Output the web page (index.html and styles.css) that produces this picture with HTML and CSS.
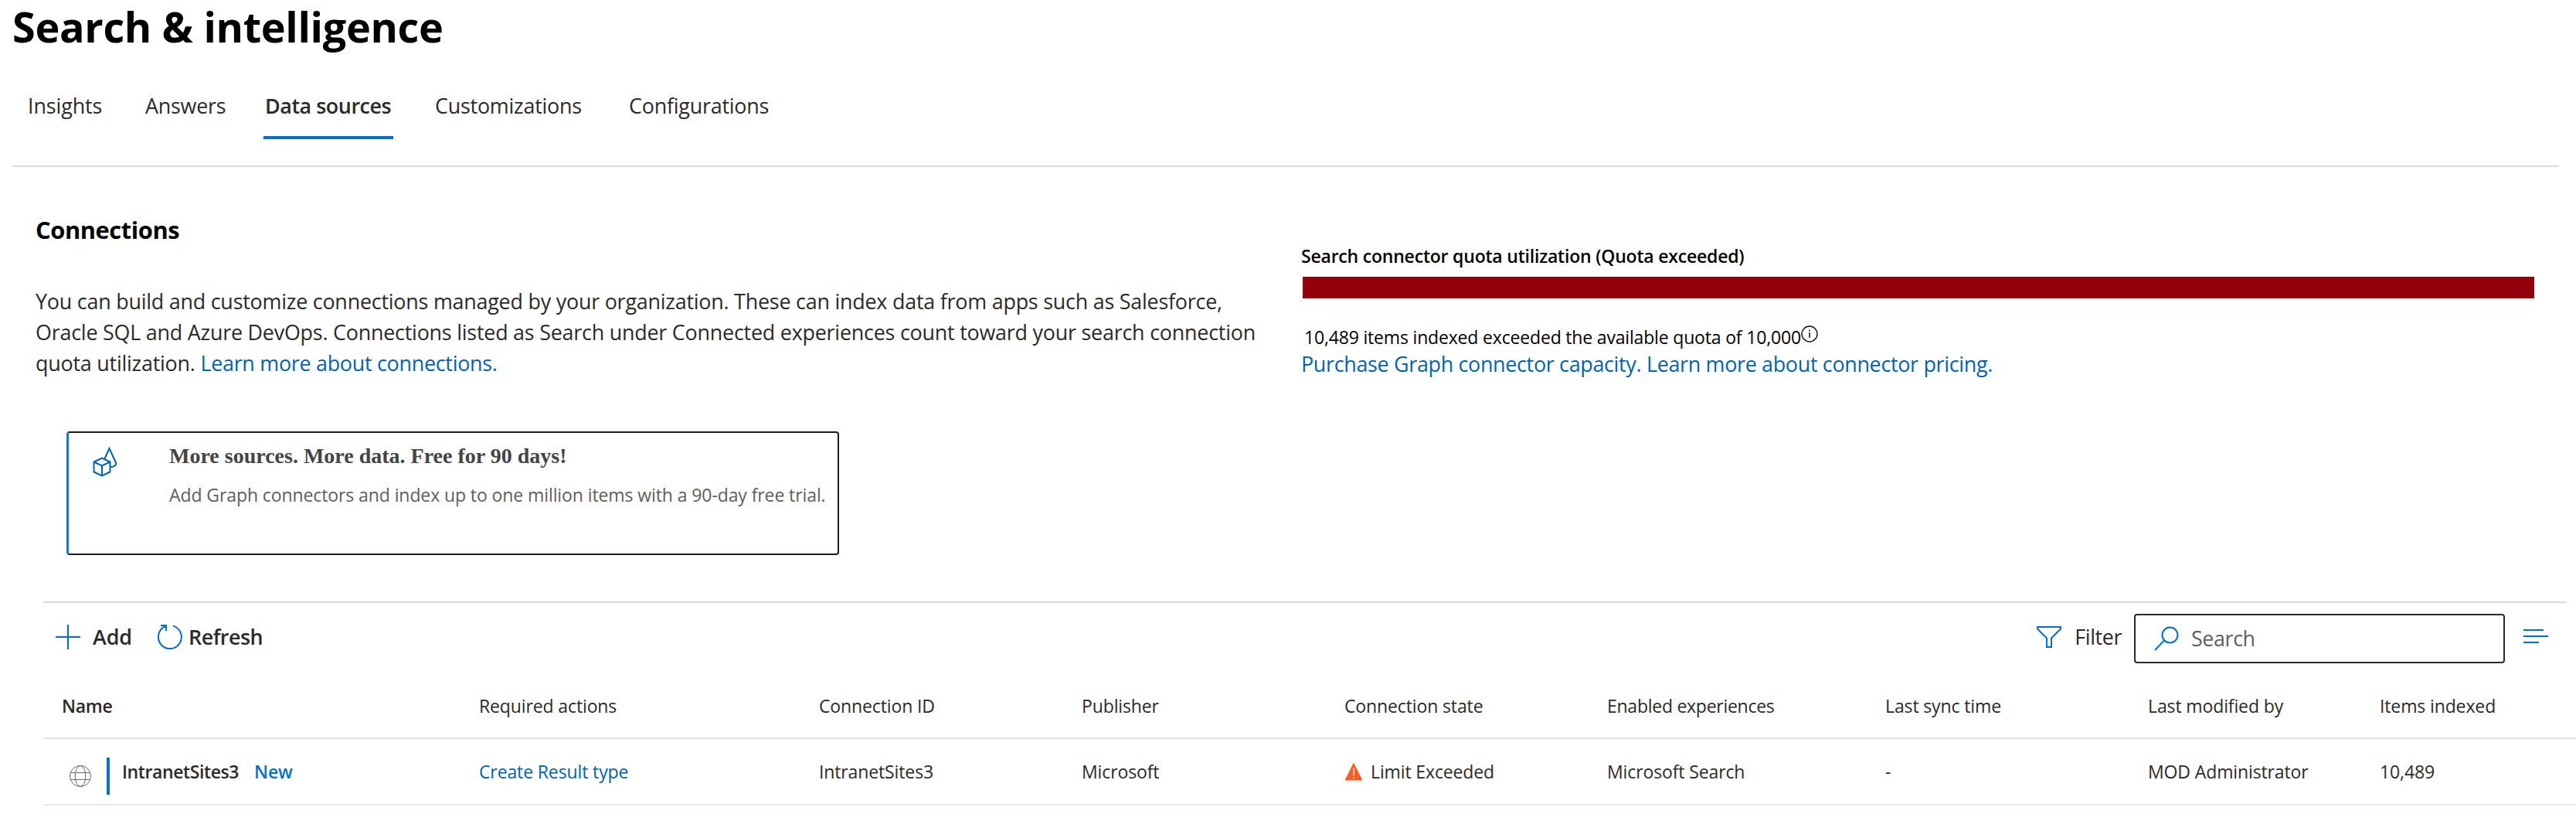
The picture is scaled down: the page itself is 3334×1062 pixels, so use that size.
FILE: index.html
```html
<!DOCTYPE html>
<html lang="en">
<head>
<meta charset="utf-8">
<title>Search &amp; intelligence</title>
<link rel="stylesheet" href="styles.css">
</head>
<body>
<header class="page-header">
  <h1 class="page-title">Search &amp; intelligence</h1>
  <nav class="tabs">
    <a class="tab tab-insights">Insights</a>
    <a class="tab">Answers</a>
    <a class="tab tab-selected">Data sources</a>
    <a class="tab">Customizations</a>
    <a class="tab">Configurations</a>
  </nav>
</header>
<main>
  <section class="overview">
    <div class="intro">
      <h2 class="section-title">Connections</h2>
      <p class="intro-text">You can build and customize connections managed by your organization. These can index data from apps such as Salesforce,<br>Oracle SQL and Azure DevOps. Connections listed as Search under Connected experiences count toward your search connection<br>quota utilization. <a class="link">Learn more about connections.</a></p>
    </div>
    <div class="quota">
      <h3 class="quota-title">Search connector quota utilization (Quota exceeded)</h3>
      <div class="quota-bar"></div>
      <p class="quota-items">10,489 items indexed exceeded the available quota of 10,000<svg class="info-icon" viewBox="0 0 22 22"><circle cx="11" cy="11" r="10" fill="none" stroke="#111" stroke-width="1.4"/><path d="M11 9v7M11 5.6v1.8" stroke="#111" stroke-width="1.5"/></svg></p>
      <p class="quota-links"><a class="link">Purchase Graph connector capacity.</a> <a class="link">Learn more about connector pricing.</a></p>
    </div>
  </section>
  <section class="promo">
    <svg class="promo-icon" viewBox="0 0 32 40" fill="none" stroke="#0063b1" stroke-width="2">
      <path d="M1.5 19.5 12 14.5 22.5 19.5V32.500L12 37.500 1.500 32.500zM1.500 19.500 12 24.500 22.500 19.500M12 24.500V37.500"/>
      <path d="M15.200 16 21.500 2 29.800 20c1.400 3.500-2 6.300-7.300 6"/>
    </svg>
    <div>
      <h3 class="promo-title">More sources. More data. Free for 90 days!</h3>
      <p class="promo-text">Add Graph connectors and index up to one million items with a 90-day free trial.</p>
    </div>
  </section>
  <section class="toolbar">
    <button class="command command-add"><svg class="icon" viewBox="0 0 32 32"><path d="M16 0v32M0 16h32" stroke="#006fce" stroke-width="2"/></svg><span>Add</span></button>
    <button class="command command-refresh"><svg class="icon" viewBox="0 0 32 32" fill="none" stroke="#006fce" stroke-width="2"><path d="M19.800 1.600A15 15 0 1 1 11.300 1.800M4 1h7v7"/></svg><span>Refresh</span></button>
    <button class="command command-filter"><svg class="icon" viewBox="0 0 32 32" fill="none" stroke="#006fce" stroke-width="2"><path d="M1 3h30v2.500L19 17.500V29h-6V17.500L1 5.500z"/></svg><span>Filter</span></button>
    <label class="search"><svg class="icon" viewBox="0 0 32 32" fill="none" stroke="#006fce" stroke-width="2"><circle cx="20.500" cy="11.500" r="10"/><path d="M13 18.500 1 31"/></svg><span>Search</span></label>
    <svg class="icon" viewBox="0 0 32 32"><path d="M0 5h26M0 13h32M0 21h20" stroke="#006fce" stroke-width="2"/></svg>
  </section>
  <section class="table">
    <div class="row row-head">
      <span class="name-head">Name</span><span>Required actions</span><span>Connection ID</span><span>Publisher</span><span>Connection state</span><span class="tight">Enabled experiences</span><span>Last sync time</span><span>Last modified by</span><span>Items indexed</span>
    </div>
    <div class="row">
      <span class="name-cell">
        <svg class="globe" viewBox="0 0 28 28" fill="none" stroke="#6b6967" stroke-width="1"><circle cx="14" cy="14" r="13.500"/><ellipse cx="14" cy="14" rx="6.800" ry="13.500"/><path d="M1.200 9.500h25.600M1.200 18.500h25.600"/></svg>
        <span class="new-marker"></span><span class="name">IntranetSites3</span><span class="new">New</span>
      </span>
      <a class="link">Create Result type</a><span>IntranetSites3</span><span>Microsoft</span>
      <span class="state"><svg class="warning" viewBox="0 0 24 24"><path d="M12 .5 23.500 23.500H.500z" fill="#fb5b1f"/><path d="M12 7.500v9.500M12 19v2.300" stroke="#fff" stroke-width="1.500"/></svg>Limit Exceeded</span>
      <span>Microsoft Search</span><span>-</span><span>MOD Administrator</span><span>10,489</span>
    </div>
  </section>
</main>
</body>
</html>
```
FILE: styles.css
```css
* { box-sizing: border-box; }
body {
  margin: 0;
  background: #fff;
  color: #2b2a29;
  font: 400 26.88px/40px "Open Sans", "Noto Sans", sans-serif;
  letter-spacing: -0.22px;
  overflow: hidden;
}
h1, h2, h3, p { margin: 0; }
svg { display: block; flex: none; }
.link { color: #0063b1; }

.page-header {
  margin: 0 22px 0 16px;
  padding-bottom: 34px;
  border-bottom: 2px solid #dcdcdc;
}
.page-title {
  font-size: 54px;
  font-weight: 700;
  line-height: 68px;
  letter-spacing: -0.35px;
  color: #000;
}
.tabs {
  display: grid;
  grid-template-columns: 152px 155px 220px 251px auto;
  margin-top: 32px;
  padding-left: 18px;
}
.tab {
  justify-self: start;
  padding: 0 2px 3px;
  line-height: 73px;
  border-bottom: 4px solid transparent;
}
.tab-insights { letter-spacing: -0.1px; }
.tab-selected {
  width: 168px;
  font-weight: 600;
  letter-spacing: -0.45px;
  border-bottom-color: #006fce;
}

.overview {
  display: grid;
  grid-template-columns: 1638px 1596px;
  padding: 61px 0 0 46px;
}
.section-title {
  font-size: 30.8px;
  font-weight: 700;
  line-height: 40px;
  letter-spacing: -0.4px;
  color: #000;
}
.intro-text { margin-top: 53px; }
.intro-text .link { letter-spacing: -0.27px; }
.quota { padding-top: 39px; color: #000; }
.quota-title { font-size: 23.04px; font-weight: 600; line-height: 30px; letter-spacing: -0.22px; }
.quota-bar { height: 28px; margin: 12px 0 35px 2px; background: #93000b; }
.quota-items {
  display: flex;
  padding-left: 4px;
  font-size: 23.04px;
  line-height: 30px;
  letter-spacing: -0.19px;
}
.info-icon { width: 22px; height: 22px; }
.quota-links { letter-spacing: -0.31px; }

.promo {
  display: flex;
  width: 1000px;
  height: 160px;
  margin: 67px 0 60px 86px;
  padding: 14px 0 0 31px;
  border: 2px solid #1d1c1b;
  border-left: 3px solid #1279d3;
  border-radius: 4px;
}
.promo-icon { width: 32px; height: 40px; margin: 4px 67px 0 0; }
.promo-title {
  font: 700 28px/32px "Liberation Serif", serif;
  letter-spacing: 0;
  color: #444;
}
.promo-text {
  margin-top: 18px;
  font-size: 23.04px;
  line-height: 32px;
  letter-spacing: -0.11px;
  white-space: nowrap;
  color: #605e5c;
}

.toolbar {
  display: flex;
  align-items: center;
  height: 94px;
  margin: 0 12px 0 56px;
  padding: 0 24px 0 16px;
  border-top: 2px solid #dcdcdc;
}
.icon { width: 32px; height: 32px; }
.command {
  display: flex;
  align-items: center;
  height: 64px;
  padding: 0 0 4px;
  border: 0;
  background: none;
  color: inherit;
  font: 600 26.88px/40px "Open Sans", "Noto Sans", sans-serif;
  letter-spacing: -0.5px;
}
.command-add { width: 100px; gap: 16px; letter-spacing: -0.1px; }
.command-refresh { margin-left: 32px; gap: 8px; }
.command-filter { margin-left: auto; gap: 17px; font-weight: 400; letter-spacing: -0.4px; }
.search {
  display: flex;
  align-items: center;
  gap: 16px;
  width: 480px;
  height: 64px;
  margin: 0 24px 0 16px;
  padding-left: 24px;
  border: 2px solid #2b2a29;
  border-radius: 4px;
  color: #605e5c;
  letter-spacing: -0.4px;
}

.table { margin-left: 56px; font-size: 23.04px; letter-spacing: -0.14px; }
.row {
  display: grid;
  grid-template-columns: 564px 440px 340px 340px 340px 360px 340px 300px 1fr;
  align-items: center;
  height: 86px;
  border-bottom: 2px solid #e8e8e8;
}
.row-head { height: 84px; border-bottom-color: #e2e2e2; }
.name-head { padding-left: 24px; font-weight: 600; letter-spacing: -0.3px; }
.tight { letter-spacing: -0.28px; }
.name-cell { display: flex; align-items: center; padding-left: 34px; }
.globe { width: 28px; height: 28px; margin: 12px 20px 0 0; }
.new-marker { width: 4px; height: 48px; margin: 12px 16px 0 0; background: #006fce; }
.name { width: 171px; font-weight: 600; letter-spacing: -0.42px; }
.new { font-weight: 600; color: #006fce; }
.state { display: flex; }
.warning { width: 24px; height: 24px; margin: 8px 10px 0 0; }
```
